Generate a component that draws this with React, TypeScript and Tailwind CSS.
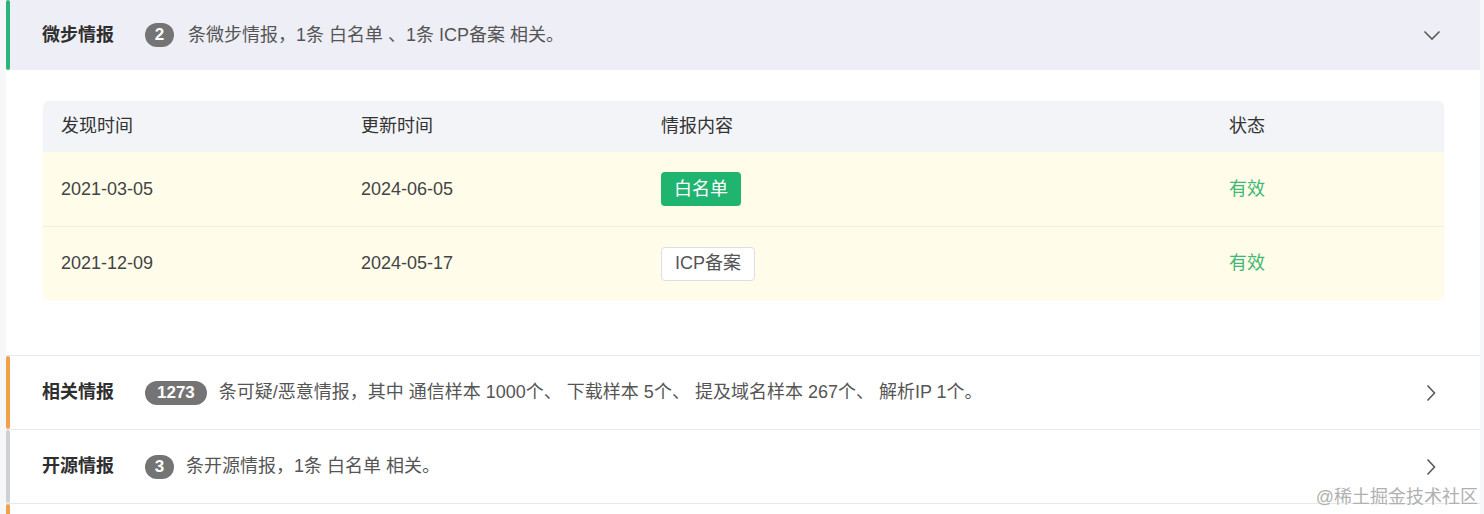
import { ReactNode } from "react";

const font = { fontFamily: '"Liberation Sans", "Noto Sans CJK SC", sans-serif' };

const rows = [
  { found: "2021-03-05", updated: "2024-06-05", tag: "白名单", solid: true, status: "有效" },
  { found: "2021-12-09", updated: "2024-05-17", tag: "ICP备案", solid: false, status: "有效" },
];

function Badge({ n }: { n: string }) {
  return (
    <span
      className={`flex h-[24px] items-center justify-center rounded-full bg-[#747474] text-[17px] font-bold text-white ${
        n.length === 1 ? "w-[29px]" : "px-3"
      }`}
    >
      {n}
    </span>
  );
}

function ChevronRight() {
  return (
    <svg width="10" height="18" viewBox="0 0 10 18" fill="none" className="shrink-0">
      <polyline points="1.5,1.5 8.5,9 1.5,16.5" stroke="#5a5a5a" strokeWidth="1.6" />
    </svg>
  );
}

function Section({
  bar,
  title,
  count,
  children,
}: {
  bar: string;
  title: string;
  count: string;
  children: ReactNode;
}) {
  return (
    <div className="flex h-[74px] border-t border-[#e8e9ee] bg-white">
      <div className={`w-[4px] shrink-0 rounded-full ${bar}`} />
      <div className="flex flex-1 items-center pl-8 pr-[44px]">
        <span className="w-[103px] shrink-0 text-[18px] font-bold text-[#2f2f2f]">{title}</span>
        <Badge n={count} />
        <span className="ml-3 flex-1 text-[18px] text-[#555]">{children}</span>
        <ChevronRight />
      </div>
    </div>
  );
}

export default function App() {
  return (
    <div className="relative h-[514px] overflow-hidden bg-[#f6f7f9] pl-[6px] pr-[4px]" style={font}>
      <div className="bg-white">
        {/* 微步情报 - expanded */}
        <div className="flex h-[70px]">
          <div className="w-[4px] shrink-0 rounded-full bg-[#2bb57a]" />
          <div className="flex flex-1 items-center bg-[#eeeef6] pl-8 pr-[39px]">
            <span className="w-[103px] shrink-0 text-[18px] font-bold text-[#2f2f2f]">微步情报</span>
            <Badge n="2" />
            <span className="ml-[14px] flex-1 text-[18px] text-[#555]">
              条微步情报，1条 白名单 、1条 ICP备案 相关。
            </span>
            <svg width="18" height="11" viewBox="0 0 18 11" fill="none">
              <polyline points="1.5,1.5 9,9 16.5,1.5" stroke="#5a5a5a" strokeWidth="1.6" />
            </svg>
          </div>
        </div>

        <div className="pb-[55px] pl-[37px] pr-[36px] pt-[31px]">
          <div className="overflow-hidden rounded-md shadow-[0_0_2px_rgba(0,0,0,0.06)]">
            <div className="grid h-[51px] grid-cols-[300px_300px_568px_1fr] items-center bg-[#f2f4f7] text-[18px] text-[#333]">
              <span className="pl-[18px]">发现时间</span>
              <span className="pl-[18px]">更新时间</span>
              <span className="pl-[18px]">情报内容</span>
              <span className="pl-[18px]">状态</span>
            </div>
            {rows.map((r, i) => (
              <div
                key={r.found}
                className={`grid h-[74px] grid-cols-[300px_300px_568px_1fr] items-center bg-[#fffcea] text-[18px] text-[#444] ${
                  i > 0 ? "border-t border-[#f1eedb]" : ""
                }`}
              >
                <span className="pl-[18px]">{r.found}</span>
                <span className="pl-[18px]">{r.updated}</span>
                <span className="pl-[18px]">
                  {r.solid ? (
                    <span className="inline-flex h-[34px] items-center rounded bg-[#1fb46f] px-[13px] text-white">
                      {r.tag}
                    </span>
                  ) : (
                    <span className="inline-flex h-[34px] items-center rounded border border-[#dcdfe4] bg-white px-[13px] text-[#555]">
                      {r.tag}
                    </span>
                  )}
                </span>
                <span className="pl-[18px] text-[#3fb874]">{r.status}</span>
              </div>
            ))}
          </div>
        </div>

        <Section bar="bg-[#f1a04c]" title="相关情报" count="1273">
          条可疑/恶意情报，其中 通信样本 1000个、 下载样本 5个、 提及域名样本 267个、 解析IP 1个。
        </Section>
        <Section bar="bg-[#cfd0d4]" title="开源情报" count="3">
          条开源情报，1条 白名单 相关。
        </Section>
        {/* next section, only its top edge is in view */}
        <div className="flex h-[74px] border-t border-[#e8e9ee] bg-white">
          <div className="w-[4px] shrink-0 rounded-full bg-[#f1a04c]" />
        </div>
      </div>

      <span className="absolute bottom-[3px] right-[6px] text-[18px] text-[#b0b0b0] [text-shadow:0_0_2px_#fff]">
        @稀土掘金技术社区
      </span>
    </div>
  );
}
